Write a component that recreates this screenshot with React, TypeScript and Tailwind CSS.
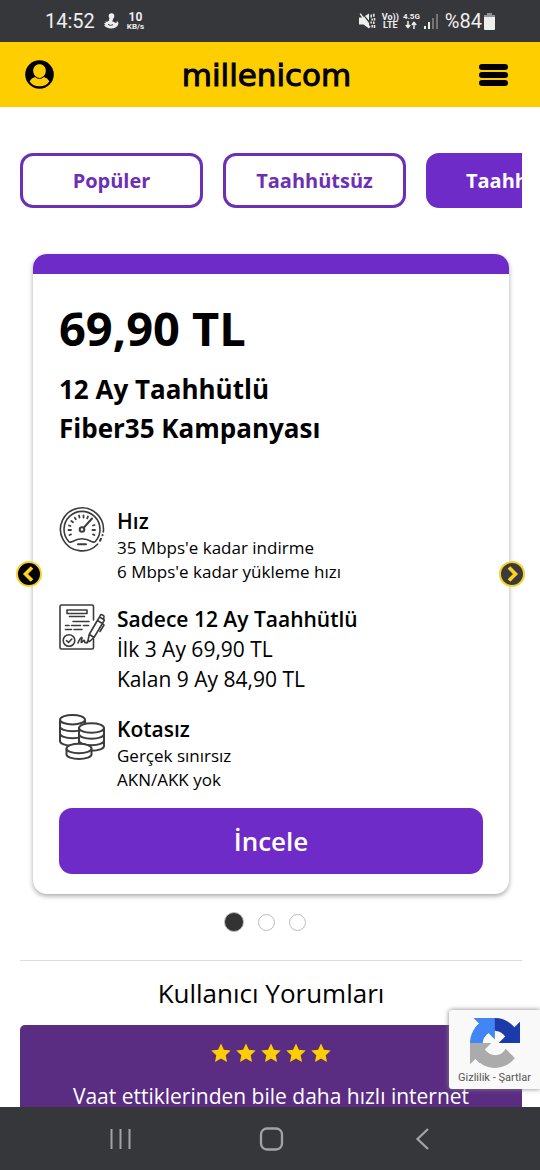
import { ReactNode, useState } from "react";

interface Plan {
  price: string;
  title: string[];
}

const plan: Plan = {
  price: "69,90 TL",
  title: ["12 Ay Taahhütlü", "Fiber35 Kampanyası"],
};

const tabs = ["Popüler", "Taahhütsüz", "Taahhütlü"];

const StatusBar = () => {
  return (
    <div className="flex h-[42px] shrink-0 items-center justify-between bg-[#36373b] px-[45px] font-[Roboto,sans-serif] text-[#eeeeef]">
      <div className="flex items-center">
        <span className="text-xl">14:52</span>
        <svg className="ml-2 h-4 w-4" viewBox="0 0 16 16" fill="currentColor">
          <circle cx="8.5" cy="3" r="2.8" />
          <path d="M6.600 4.500 10.500 5 9.200 8.600c2.200.4 3 1.600 4.200 1.200.7-.3.600-1.100.2-1.800 1.700.6 2.200 2.200 1.500 3.800-1.100 2.500-3.600 3.700-6.800 3.700-3.400 0-6-1.200-7.300-3.200l1.400-.3L.8 10.300l2.100-.2-.7-1.500c1.400.2 2.600.2 3.600-.8z" />
          <path d="M5 11.300c1.400 1.200 3.400 1.300 5 .3" stroke="#36373b" fill="none" />
        </svg>
        <div className="ml-2 flex flex-col items-center font-bold">
          <span className="text-[12px] leading-3">10</span>
          <span className="text-[8px] leading-2">KB/s</span>
        </div>
      </div>
      <div className="flex items-center">
        <svg className="h-4 w-[17px]" viewBox="0 0 17 16" fill="currentColor">
          <path d="M0 4.500h3.500l1.500-1L10 10v5.500L4.500 11.500H0z" />
          <path d="M6 3 10 .5v7z" />
          <path d="M1.200.6 11 14.500" stroke="currentColor" strokeWidth="1.400" />
          <path
            d="M12.200 1.500v3M14.800.8v3M13.200 5.500v2M15.500 5v2.500M12.200 8.500v2M14.800 8.500v2.500M13.200 12v2.500M15.500 12v3"
            fill="none"
            stroke="currentColor"
            strokeWidth="1.500"
          />
        </svg>
        <div className="ml-1.5 flex flex-col items-center text-[9px] leading-2 font-bold">
          <span>Vo))</span>
          <span>LTE</span>
        </div>
        <div className="ml-1 flex flex-col items-center text-[8px] leading-2 font-bold">
          <span>4.5G</span>
          <svg className="h-2 w-3" viewBox="0 0 12 8" fill="none" stroke="currentColor" strokeWidth="1.500">
            <path d="M3 0v6M.8 4 3 6.500 5.200 4M9 8V1.500M6.800 4 9 1.500 11.200 4" />
          </svg>
        </div>
        <svg className="ml-1 h-4 w-[15px]" viewBox="0 0 15 16" fill="currentColor">
          <path d="M0 13h2v3H0zM4 9h2v7H4z" />
          <path d="M8 5h2v11H8zM12 1h2v15h-2z" opacity=".35" />
        </svg>
        <span className="ml-1.5 text-xl">%84</span>
        <svg className="ml-0.5 h-[17px] w-[11px]" viewBox="0 0 11 17" fill="currentColor">
          <path d="M3 0h5v2h3v3H0V2h3z" opacity=".5" />
          <path d="M0 4h11v12a1 1 0 0 1-1 1H1a1 1 0 0 1-1-1z" />
        </svg>
      </div>
    </div>
  );
};

const Header = () => {
  return (
    <header className="flex h-[65px] shrink-0 items-center justify-between bg-[#ffce00] pr-8 pl-[25px]">
      <button aria-label="Hesabım" className="cursor-pointer">
        <svg className="h-[29px] w-[29px]" viewBox="0 0 30 30">
          <circle cx="15" cy="15" r="14.800" />
          <path
            d="M15 18.500c-3.700 0-6.500-3.300-6.500-7.300S11.300 4.500 15 4.500s6.500 2.700 6.500 6.700-2.800 7.300-6.500 7.300z"
            fill="#ffce00"
          />
          <path d="M4.800 22.200c1.200-2.500 3.200-4 5.700-4.700 2.500 2.700 6.500 2.700 9 0 2.500.7 4.500 2.200 5.700 4.700A12.500 12.500 0 0 1 15 27.200 12.500 12.500 0 0 1 4.800 22.200z" fill="#ffce00" />
        </svg>
      </button>
      <a
        href="#"
        className="font-['DejaVu_Sans',sans-serif] text-[31px] leading-8 text-black [-webkit-text-stroke:1px_black]"
      >
        millenicom
      </a>
      <button aria-label="Menü" className="flex w-[29px] cursor-pointer flex-col gap-[2px]">
        <span className="h-[6px] rounded-full bg-black" />
        <span className="h-[6px] rounded-full bg-black" />
        <span className="h-[6px] rounded-full bg-black" />
      </button>
    </header>
  );
};

const SpeedIcon = () => (
  <svg className="h-[46px] w-[46px]" viewBox="0 0 46 46" fill="none" stroke="#3c3c3c" strokeWidth="1.600" strokeLinecap="round">
    <path d="M44.300 26A21.500 21.500 0 1 0 38.500 38.200" />
    <path d="M42 32.800l-1 2M43.500 29v.2" strokeWidth="2" />
    <path d="M9.500 35.300a18 18 0 1 1 27 0c-1.500 1.300-2.500 1-4 .2-6-3.500-13-3.500-19 0-1.500.8-2.500 1.100-4-.2z" />
    <circle cx="23" cy="23.500" r="2.300" strokeWidth="2" />
    <path d="M24.800 21.700 33 12.500" strokeWidth="2" />
    <path d="M19 38.300h8" strokeWidth="2" />
    <path d="M9.500 24H12M10 19.500l1.500.5M12.300 15l1.700 1.200M15.800 11.800l1 1.500M20 9.500l.5 2M24.500 9.500v2M29 10.500l-.8 1.800M36 24h-2.500M35.500 19l-1.500.5M10.500 29l1.500-.6M35.500 29l-1.500-.6" strokeWidth="1.800" />
  </svg>
);

const ContractIcon = () => (
  <svg className="h-[46px] w-[46px]" viewBox="0 0 46 46" fill="none" stroke="#3c3c3c" strokeWidth="1.600" strokeLinecap="round" strokeLinejoin="round">
    <path d="M34.500 16V2.500A1.500 1.500 0 0 0 33 1H2.500A1.500 1.500 0 0 0 1 2.500v41A1.500 1.500 0 0 0 2.500 45H33a1.500 1.500 0 0 0 1.500-1.500V35" />
    <path d="M8 6h20v3.500H8zM10.500 12.500h15" />
    <path d="M6.500 21.500H10M12.500 21.500h9M14 17.500h16M24.500 21.500h5M6.500 25.500h6M15 25.500h8" />
    <circle cx="10" cy="36.500" r="5.800" />
    <path d="M7.500 36.500l2 2 3.300-3.500" />
    <path d="M19 39c1.500-4 3.500-6 4-5.500.600.600-1.500 4.500-.8 5 .7.400 2.300-2.500 3-2.200.8.300 0 2.200 1 2.500 1 .2 1.800-.9 2.600-.9" />
    <path d="M29 36.500 28 39M29 36.500l1.200-6L40.500 13l5 3L35 33.500l-4.500 4zM30.500 30.500l4.500 3M38.500 16.500l5 3M40.500 13l1-2c.6-1 3.800.5 3.500 2l-.5 2M44 20l1 1-4 6.500M38 17l-7 12" />
  </svg>
);

const CoinsIcon = () => (
  <svg className="h-[46px] w-[46px]" viewBox="0 0 46 46" fill="#ffffff" stroke="#3c3c3c" strokeWidth="2">
    <path d="M1 6v21c0 2.600 5.500 4.700 12.500 4.700S26 29.600 26 27V6" />
    <path d="M1 12.500c0 2.600 5.500 4.700 12.500 4.700S26 15.100 26 12.500M1 19.500c0 2.600 5.500 4.700 12.500 4.700S26 22.100 26 19.500" fill="none" />
    <ellipse cx="13.500" cy="5.700" rx="12.500" ry="4.700" />
    <path d="M20 14v18c0 2.600 5.500 4.700 12.500 4.700S45 34.600 45 32V14" />
    <path d="M20 20c0 2.600 5.500 4.700 12.500 4.700S45 22.600 45 20M20 26.500c0 2.600 5.500 4.700 12.500 4.700S45 29.100 45 26.500" fill="none" />
    <ellipse cx="32.500" cy="14" rx="12.500" ry="4.700" />
    <path d="M7.500 34.500v6c0 2.400 5.500 4.400 12.500 4.400s12.500-2 12.500-4.400v-6" />
    <ellipse cx="20" cy="34.500" rx="12.500" ry="4.700" />
  </svg>
);

interface FeatureProps {
  icon: ReactNode;
  title: string;
  children: ReactNode;
}

const Feature = ({ icon, title, children }: FeatureProps) => {
  return (
    <li className="flex gap-3">
      <div className="shrink-0">{icon}</div>
      <div>
        <h3 className="text-[21px] leading-[30px] font-semibold">{title}</h3>
        {children}
      </div>
    </li>
  );
};

const ArrowButton = ({ direction }: { direction: "left" | "right" }) => {
  const isLeft = direction === "left";
  return (
    <button
      aria-label={isLeft ? "Önceki" : "Sonraki"}
      className={`absolute top-1/2 flex h-[26px] w-[26px] -translate-y-1/2 cursor-pointer items-center justify-center rounded-full border-2 border-[#f7d028] ${
        isLeft ? "left-4 bg-black" : "right-[15px] bg-[#3a3a3a]"
      }`}
    >
      <svg className="h-4 w-4" viewBox="0 0 16 16" fill="none" stroke="#ffd21f" strokeWidth="3.600">
        <path d={isLeft ? "M11 1.500 4.500 8l6.500 6.500" : "M5 1.500 11.500 8 5 14.500"} />
      </svg>
    </button>
  );
};

const PlanCard = () => {
  return (
    <article className="overflow-hidden rounded-[14px] bg-white shadow-[0_2px_5px_rgba(0,0,0,0.35)]">
      <div className="h-5 bg-[#6f2bc8]" />
      <div className="px-[26px] pt-5 pb-5">
        <p className="text-[47px] leading-[68px] font-bold">{plan.price}</p>
        <h2 className="mt-2 text-[26px] leading-[39px] font-bold">
          {plan.title[0]}
          <br />
          {plan.title[1]}
        </h2>
        <ul className="mt-[58px] flex flex-col gap-5">
          <Feature icon={<SpeedIcon />} title="Hız">
            <p className="text-[17px] leading-6">
              35 Mbps'e kadar indirme
              <br />6 Mbps'e kadar yükleme hızı
            </p>
          </Feature>
          <Feature icon={<ContractIcon />} title="Sadece 12 Ay Taahhütlü">
            <p className="text-[21px] leading-[30px]">
              İlk 3 Ay 69,90 TL
              <br />
              Kalan 9 Ay 84,90 TL
            </p>
          </Feature>
          <Feature icon={<CoinsIcon />} title="Kotasız">
            <p className="text-[17px] leading-6">
              Gerçek sınırsız
              <br />
              AKN/AKK yok
            </p>
          </Feature>
        </ul>
        <button className="mt-4 h-[66px] w-full cursor-pointer rounded-[13px] bg-[#6f2bc8] text-[26px] font-semibold text-white">
          İncele
        </button>
      </div>
    </article>
  );
};

const Star = () => (
  <svg className="h-5 w-5" viewBox="0 0 20 20" fill="#ffce00">
    <path d="M10 .5l2.900 6.200 6.800.8-5 4.700 1.300 6.800-6-3.400-6 3.400 1.300-6.800-5-4.700 6.800-.8z" />
  </svg>
);

const Recaptcha = () => {
  return (
    <a
      href="#"
      className="absolute right-0 bottom-[81px] flex h-[79px] w-[91px] flex-col items-center rounded-l-[3px] bg-[#f9f9f9] pt-2 font-[Roboto,sans-serif] text-[11px] text-[#555555] shadow-[0_0_5px_gray]"
    >
      <svg className="h-[50px] w-[50px]" viewBox="0 0 64 64">
        <path
          fill="#1c3aa9"
          d="M64 31.955a33 33 0 0 0-.024-1.378V4.687l-7.157 7.157C50.961 4.674 42.052.094 32.073.094c-10.385 0-19.610 4.960-25.449 12.640l11.730 11.854a15.550 15.550 0 0 1 4.754-5.334c2.050-1.600 4.952-2.906 8.964-2.906.485 0 .860.057 1.135.163 4.970.392 9.280 3.135 11.816 7.117l-8.304 8.304 27.281.023"
        />
        <path
          fill="#4285f4"
          d="M31.862.094a34 34 0 0 0-1.377.024H4.594l7.157 7.157C4.581 13.133 0 22.042 0 32.021c0 10.385 4.960 19.610 12.640 25.449l11.854-11.731a15.550 15.550 0 0 1-5.334-4.754c-1.600-2.050-2.906-4.952-2.906-8.964 0-.485.057-.860.163-1.135.392-4.970 3.135-9.280 7.117-11.816l8.304 8.304.024-27.280"
        />
        <path
          fill="#ababab"
          d="M.001 32.024c.004.469.016.927.024 1.377v25.891l7.157-7.157c5.858 7.170 14.767 11.750 24.746 11.750 10.385 0 19.610-4.960 25.449-12.640L45.646 39.391a15.550 15.550 0 0 1-4.754 5.334c-2.050 1.600-4.952 2.906-8.964 2.906-.485 0-.860-.057-1.135-.163-4.970-.392-9.280-3.135-11.816-7.117l8.304-8.304L0 32.024"
        />
      </svg>
      <span className="leading-5">Gizlilik - Şartlar</span>
    </a>
  );
};

const NavBar = () => {
  return (
    <nav className="flex h-[63px] shrink-0 items-center justify-between bg-[#36373b] px-[105px] text-[#a2a3a6]">
      <button aria-label="Son uygulamalar">
        <svg className="h-8 w-8" viewBox="0 0 32 32" fill="none" stroke="currentColor" strokeWidth="2">
          <path d="M6.500 6v20M15.500 6v20M24.500 6v20" />
        </svg>
      </button>
      <button aria-label="Ana ekran">
        <svg className="h-8 w-8" viewBox="0 0 32 32" fill="none" stroke="currentColor" strokeWidth="2.300">
          <rect x="7" y="5.500" width="21" height="21" rx="6" />
        </svg>
      </button>
      <button aria-label="Geri">
        <svg className="h-8 w-8" viewBox="0 0 32 32" fill="none" stroke="currentColor" strokeWidth="2.300">
          <path d="M25 6 14.500 16 25 26" />
        </svg>
      </button>
    </nav>
  );
};

export default function App() {
  const [activeTab, setActiveTab] = useState(2);
  const [slide, setSlide] = useState(0);

  return (
    <div className="relative flex h-screen flex-col bg-white font-['Open_Sans','Noto_Sans',sans-serif] text-black">
      <StatusBar />
      <Header />
      <main className="min-h-0 flex-1 overflow-y-auto [scrollbar-width:none]">
        <div className="mt-[46px] mr-[18px] ml-5 flex gap-5 overflow-x-auto [scrollbar-width:none]">
          {tabs.map((tab, i) => (
            <button
              key={tab}
              onClick={() => setActiveTab(i)}
              className={`h-[55px] w-[183px] shrink-0 cursor-pointer rounded-[13px] border-3 text-xl font-bold ${
                activeTab === i ? "border-[#6f2bc8] bg-[#6f2bc8] text-white" : "border-[#6c2fb5] bg-white text-[#6c2fb5]"
              }`}
            >
              {tab}
            </button>
          ))}
        </div>

        <section className="relative mt-[46px] pr-[31px] pl-[33px]">
          <PlanCard />
          <ArrowButton direction="left" />
          <ArrowButton direction="right" />
        </section>

        <div className="mt-[18px] mr-[10px] flex h-5 items-center justify-center gap-[14px]">
          {[0, 1, 2].map((i) => (
            <button
              key={i}
              aria-label={`Sayfa ${i + 1}`}
              onClick={() => setSlide(i)}
              className={`cursor-pointer rounded-full border border-[#bbbbbb] ${
                slide === i ? "h-5 w-5 bg-[#333333]" : "h-[17px] w-[17px] bg-white"
              }`}
            />
          ))}
        </div>

        <section className="mt-7 mr-[18px] ml-5 border-t border-[#dddddd] pt-3">
          <h2 className="text-center text-[26px] leading-10">Kullanıcı Yorumları</h2>
          <div className="mt-3 rounded-[5px] bg-[#5a2d82] px-10 pt-[18px] pb-8 text-center text-white">
            <div className="flex justify-center gap-[5px]">
              {[0, 1, 2, 3, 4].map((i) => (
                <Star key={i} />
              ))}
            </div>
            <p className="mt-[18px] text-[21px] leading-[30px]">Vaat ettiklerinden bile daha hızlı internet</p>
          </div>
        </section>
      </main>
      <NavBar />
      <Recaptcha />
    </div>
  );
}
